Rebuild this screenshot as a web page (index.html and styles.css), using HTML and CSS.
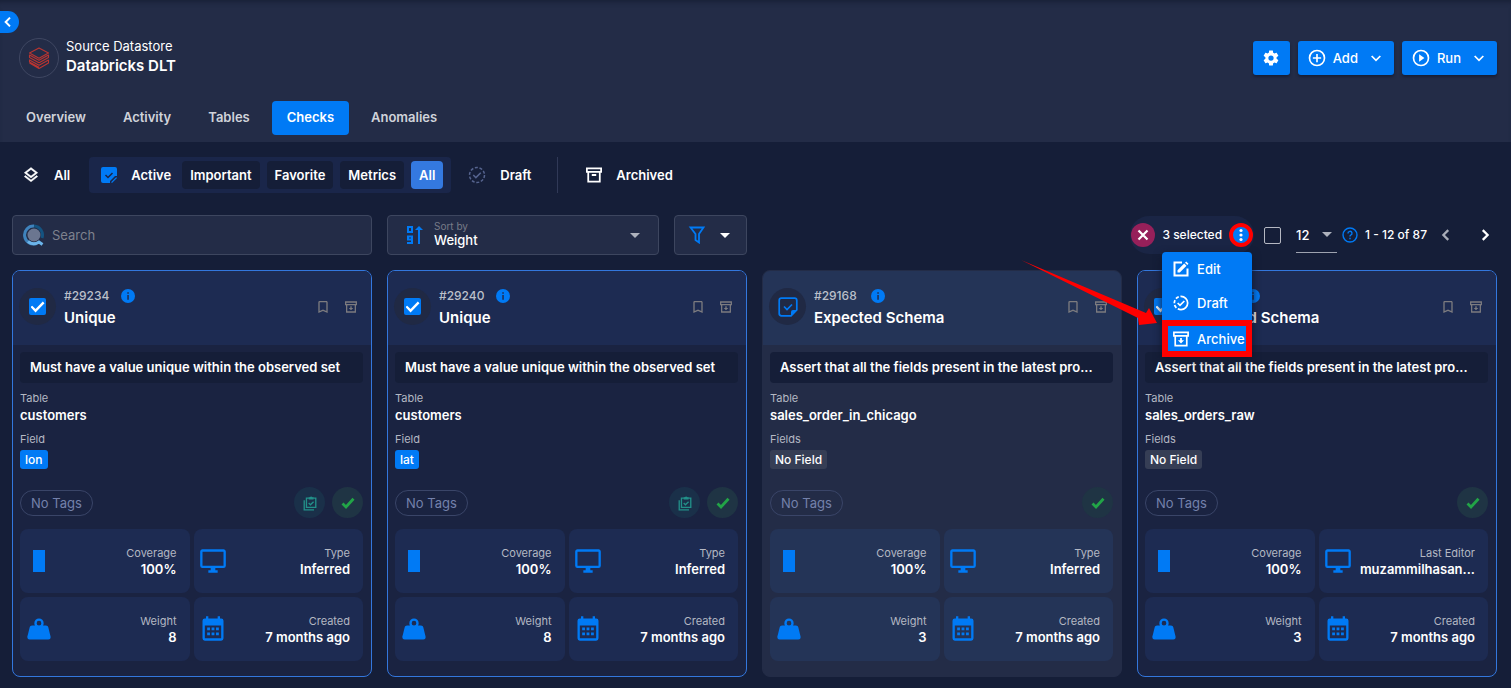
FILE: index.html
```
<!DOCTYPE html>
<html lang="en">
<head>
<meta charset="utf-8">
<meta name="viewport" content="width=device-width, initial-scale=1">
<title>Databricks DLT - Checks</title>
<link rel="stylesheet" href="styles.css">
</head>
<body>
<svg class="sprite" aria-hidden="true">
  <symbol id="chevron-left" viewBox="0 0 24 24"><path d="M15 5.500L8.500 12L15 18.500" fill="none" stroke="currentColor" stroke-width="3"/></symbol>
  <symbol id="chevron-right" viewBox="0 0 24 24"><path d="M9 5.500L15.500 12L9 18.500" fill="none" stroke="currentColor" stroke-width="3"/></symbol>
  <symbol id="chevron-down" viewBox="0 0 24 24"><path d="M5.500 9L12 15.500L18.500 9" fill="none" stroke="currentColor" stroke-width="2.600"/></symbol>
  <symbol id="caret" viewBox="0 0 10 5"><path d="M0 0H10L5 5Z" fill="currentColor"/></symbol>
  <symbol id="cog" viewBox="0 0 24 24"><path fill="currentColor" d="M12,15.5A3.5,3.5 0 0,1 8.500,12A3.500,3.500 0 0,1 12,8.500A3.500,3.500 0 0,1 15.500,12A3.500,3.500 0 0,1 12,15.500M19.430,12.970C19.470,12.650 19.500,12.330 19.500,12C19.500,11.670 19.470,11.340 19.430,11L21.540,9.370C21.730,9.220 21.780,8.950 21.660,8.730L19.660,5.270C19.540,5.050 19.270,4.960 19.050,5.050L16.560,6.050C16.040,5.660 15.500,5.320 14.870,5.070L14.500,2.420C14.460,2.180 14.250,2 14,2H10C9.750,2 9.540,2.180 9.500,2.420L9.130,5.070C8.500,5.320 7.960,5.660 7.440,6.050L4.950,5.050C4.730,4.960 4.460,5.050 4.340,5.270L2.340,8.730C2.210,8.950 2.270,9.220 2.460,9.370L4.570,11C4.530,11.340 4.500,11.670 4.500,12C4.500,12.330 4.530,12.650 4.570,12.970L2.460,14.630C2.270,14.780 2.210,15.050 2.340,15.270L4.340,18.730C4.460,18.950 4.730,19.030 4.950,18.950L7.440,17.940C7.960,18.340 8.500,18.680 9.130,18.930L9.500,21.580C9.540,21.820 9.750,22 10,22H14C14.250,22 14.460,21.820 14.500,21.580L14.870,18.930C15.500,18.670 16.040,18.340 16.560,17.940L19.050,18.950C19.270,19.030 19.540,18.950 19.660,18.730L21.660,15.270C21.780,15.050 21.730,14.780 21.540,14.630L19.430,12.970Z"/></symbol>
  <symbol id="plus-circle" viewBox="0 0 24 24"><g fill="none" stroke="currentColor" stroke-width="2.200"><circle cx="12" cy="12" r="10"/><path d="M12 6.500V17.500M6.500 12H17.500"/></g></symbol>
  <symbol id="play-circle" viewBox="0 0 24 24"><circle cx="12" cy="12" r="10" fill="none" stroke="currentColor" stroke-width="2.200"/><path d="M9.500 7L16.500 12L9.500 17Z" fill="currentColor"/></symbol>
  <symbol id="layers" viewBox="0 0 24 24"><path fill="currentColor" stroke="currentColor" stroke-width="0.600" d="M12,18.540L19.370,12.800L21,14.070L12,21.070L3,14.070L4.620,12.810L12,18.540M12,16L3,9L12,2L21,9L12,16M12,4.530L6.260,9L12,13.470L17.740,9L12,4.530Z"/></symbol>
  <symbol id="note-solid" viewBox="0 0 16 16"><path d="M2 0H14A2 2 0 0 1 16 2V9H14L9 14V16H2A2 2 0 0 1 0 14V2A2 2 0 0 1 2 0Z" fill="#007af5"/><path d="M10.500 16V14.800L14.800 10.500H16V11L11 16Z" fill="#007af5"/><path d="M4.500 8L7 10.500L11.500 6" fill="none" stroke="#1a2547" stroke-width="1.500"/></symbol>
  <symbol id="note-outline" viewBox="0 0 20 20"><path d="M13 18.800H3.500A2.300 2.300 0 0 1 1.200 16.500V3.500A2.300 2.300 0 0 1 3.500 1.200H16.500A2.300 2.300 0 0 1 18.800 3.500V13Z" fill="none" stroke="#007af5" stroke-width="1.700"/><path d="M19 13L13 19V15A2 2 0 0 1 15 13Z" fill="#007af5"/><path d="M6 9.500L9 12.500L14 7.500" fill="none" stroke="#007af5" stroke-width="1.700"/></symbol>
  <symbol id="draft" viewBox="0 0 24 24"><path d="M7 12L10.500 15.500L17 9" fill="none" stroke="currentColor" stroke-width="2"/><circle cx="12" cy="12" r="10" fill="none" stroke="currentColor" stroke-width="2" stroke-dasharray="4 2.280"/></symbol>
  <symbol id="draft-half" viewBox="0 0 24 24"><g fill="none" stroke="currentColor" stroke-width="2.600"><path d="M7 12L10.500 15.500L17 9M12 2A10 10 0 0 1 12 22"/><path d="M12 22A10 10 0 0 1 12 2" stroke-dasharray="5 2.600"/></g></symbol>
  <symbol id="archived" viewBox="0 0 18 18"><path d="M1 1.500H17V5.500H1ZM2.500 5.500V16.500H15.500V5.500M6.500 9H11.500" fill="none" stroke="currentColor" stroke-width="2"/></symbol>
  <symbol id="archive-down" viewBox="0 0 18 18"><path d="M1 1.500H17V5.500H1ZM2.500 5.500V16.500H15.500V5.500" fill="none" stroke="currentColor" stroke-width="1.900"/><path d="M8 8H10V10.500H12.500L9 14L5.500 10.500H8Z" fill="currentColor"/></symbol>
  <symbol id="bookmark" viewBox="0 0 24 24"><path fill="currentColor" d="M17,18L12,15.820L7,18V5H17M17,3H7A2,2 0 0,0 5,5V21L12,18L19,21V5C19,3.890 18.100,3 17,3Z"/></symbol>
  <symbol id="info" viewBox="0 0 14 14"><circle cx="7" cy="7" r="7" fill="#007af5"/><path d="M6.300 3.200H7.800V4.700H6.300ZM6.300 6H7.800V10.800H6.300Z" fill="#202b4d"/></symbol>
  <symbol id="edit" viewBox="0 0 16 16"><path d="M9 1.500H1.500V14.500H14.500V7.500" fill="none" stroke="currentColor" stroke-width="2"/><path d="M4.500 9.200L11.200 2.500L13.500 4.800L6.800 11.500H4.500ZM12 1.700L13.200 0.500L15.500 2.800L14.300 4Z" fill="currentColor"/></symbol>
  <symbol id="clipboards" viewBox="0 0 16 18"><g fill="none" stroke="currentColor" stroke-width="1.500"><path d="M4 3.500H14.500V14H4ZM1.500 6V16.700H12.500M6.500 9L8.500 11L12 7.500"/></g><path d="M6.500 5V2.500H8A1.300 1.300 0 0 1 10.500 2.500H12V5Z" fill="currentColor"/></symbol>
  <symbol id="tick" viewBox="0 0 14 12"><path d="M1.500 6.500L5 10L12.500 1.800" fill="none" stroke="currentColor" stroke-width="2.800"/></symbol>
  <symbol id="coverage" viewBox="0 0 28 28"><path d="M8 3H20V25H8Z" fill="currentColor"/></symbol>
  <symbol id="monitor" viewBox="0 0 24 24"><path fill="currentColor" d="M21,16H3V4H21M21,2H3C1.890,2 1,2.890 1,4V16A2,2 0 0,0 3,18H10V20H8V22H16V20H14V18H21A2,2 0 0,0 23,16V4C23,2.890 22.100,2 21,2Z"/></symbol>
  <symbol id="weight" viewBox="0 0 24 24"><path fill="currentColor" d="M12,3A4,4 0 0,1 16,7C16,7.730 15.810,8.410 15.460,9H18C18.950,9 19.750,9.670 19.950,10.560C21.960,18.570 22,18.780 22,19A2,2 0 0,1 20,21H4A2,2 0 0,1 2,19C2,18.780 2.040,18.570 4.050,10.560C4.250,9.670 5.050,9 6,9H8.540C8.190,8.410 8,7.730 8,7A4,4 0 0,1 12,3M12,5A2,2 0 0,0 10,7A2,2 0 0,0 12,9A2,2 0 0,0 14,7A2,2 0 0,0 12,5Z"/></symbol>
  <symbol id="calendar" viewBox="0 0 24 24"><path fill="currentColor" fill-rule="evenodd" d="M6 1H8V3H16V1H18V3H19A2 2 0 0 1 21 5V20A2 2 0 0 1 19 22H5A2 2 0 0 1 3 20V5A2 2 0 0 1 5 3H6ZM5 9V20H19V9Z"/><path d="M7 10.700H9.400V13.100H7ZM10.800 10.700H13.200V13.100H10.800ZM14.600 10.700H17V13.100H14.600ZM7 15H9.400V17.400H7ZM10.800 15H13.200V17.400H10.800ZM14.600 15H17V17.400H14.600Z" fill="currentColor"/></symbol>
</svg>

<header class="header">
  <button class="drawer-toggle" aria-label="Open sidebar"><svg class="i16"><use href="#chevron-left"/></svg></button>
  <div class="header-top">
    <div class="avatar">
      <svg class="i24" viewBox="0 0 24 24" fill="none" stroke="#b93531" stroke-width="1.100" stroke-linejoin="round"><path d="M2.500 7L12 2L21.500 7L12 12.200ZM2.500 9V11.500L12 16.700L21.500 11.500V9L12 14.200ZM2.500 13.500V16L12 21.200M2.500 17L12 22.500L21.500 17V14L12 19.200L2.500 14"/></svg>
    </div>
    <div class="titles">
      <p class="kind">Source Datastore</p>
      <h1 class="name">Databricks DLT</h1>
    </div>
    <div class="actions">
      <button class="btn btn-icon" aria-label="Settings"><svg class="i18"><use href="#cog"/></svg></button>
      <button class="btn"><svg class="i18"><use href="#plus-circle"/></svg><span>Add</span><svg class="i16"><use href="#chevron-down"/></svg></button>
      <button class="btn"><svg class="i18"><use href="#play-circle"/></svg><span>Run</span><svg class="i16"><use href="#chevron-down"/></svg></button>
    </div>
  </div>
  <nav class="tabs">
    <a class="tab" href="#overview">Overview</a>
    <a class="tab" href="#activity">Activity</a>
    <a class="tab" href="#tables">Tables</a>
    <a class="tab tab-on" href="#checks" aria-current="page">Checks</a>
    <a class="tab" href="#anomalies">Anomalies</a>
  </nav>
</header>

<main class="main">
  <div class="status">
    <button class="state"><svg class="i18"><use href="#layers"/></svg>All</button>
    <div class="state-group">
      <button class="state state-active"><svg class="i16"><use href="#note-solid"/></svg>Active</button>
      <button class="pill">Important</button>
      <button class="pill">Favorite</button>
      <button class="pill">Metrics</button>
      <button class="pill pill-on">All</button>
    </div>
    <button class="state state-draft"><svg class="i18 muted-icon"><use href="#draft"/></svg>Draft</button>
    <button class="state state-archived"><svg class="i16"><use href="#archived"/></svg>Archived</button>
  </div>

  <div class="toolbar">
    <label class="field search">
      <svg class="search-icon" viewBox="0 0 22 22" aria-hidden="true"><circle cx="11" cy="11" r="6.500" fill="#6b7690"/><g fill="none" stroke-width="3"><path d="M19 14A9 9 0 0 0 11 2" stroke="#145381"/><path d="M11 2A9 9 0 1 0 13.500 19.500" stroke="#3f83bd"/><path d="M5 17.500A9 9 0 0 0 16 18L19.500 20.500" stroke="#6bb4ea"/></g></svg>
      <input type="text" placeholder="Search" aria-label="Search">
    </label>
    <div class="field sort">
      <svg class="sort-icon" viewBox="0 0 18 20" fill="none" stroke="#007af5" stroke-width="2" aria-hidden="true"><path d="M2 2H6V7H2ZM6 14.500H2V11.500H6V18H1M13 19V3"/><path d="M9 5H17L13 1Z" fill="#007af5" stroke="none"/></svg>
      <div class="sort-text">
        <label for="sort">Sort by</label>
        <select id="sort"><option>Weight</option></select>
      </div>
      <svg class="caret caret-dim"><use href="#caret"/></svg>
    </div>
    <button class="field filter" aria-label="Filter">
      <svg class="i18" viewBox="0 0 18 18" fill="none" stroke="#007af5" stroke-width="1.800"><path d="M2.500 1.500H15.500L11 8V16.500L7.500 14V8Z"/></svg>
      <svg class="caret"><use href="#caret"/></svg>
    </button>

    <div class="paging">
      <div class="selection">
        <button class="round clear" aria-label="Clear selection"><svg class="i16" viewBox="0 0 16 16" stroke="#fff" stroke-width="2.200"><path d="M3.500 3.500L12.500 12.500M12.500 3.500L3.500 12.500"/></svg></button>
        <span class="count">3 selected</span>
        <button class="round more" aria-label="Bulk actions"><svg class="i16" viewBox="0 0 16 16" fill="#fff"><circle cx="8" cy="3.500" r="1.600"/><circle cx="8" cy="8" r="1.600"/><circle cx="8" cy="12.500" r="1.600"/></svg></button>
        <div class="menu">
          <button class="menu-item"><svg class="i16"><use href="#edit"/></svg>Edit</button>
          <button class="menu-item"><svg class="i16"><use href="#draft-half"/></svg>Draft</button>
          <button class="menu-item menu-marked"><svg class="i16"><use href="#archive-down"/></svg>Archive</button>
        </div>
        <svg class="pointer" viewBox="0 0 136 66" aria-hidden="true"><path d="M0 0L125 53L128 48L136 63L118 65L117 58Z" fill="#ff0000"/></svg>
      </div>
      <input class="box box-empty" type="checkbox" aria-label="Select all">
      <div class="size">
        <select aria-label="Items per page"><option>12</option></select>
        <svg class="caret caret-dim"><use href="#caret"/></svg>
      </div>
      <svg class="help" viewBox="0 0 16 16" fill="none" stroke="#007af5" stroke-width="1.400" aria-hidden="true"><circle cx="8" cy="8" r="7"/><path d="M6 6.500A2 2 0 1 1 8.700 8.200Q8 8.600 8 9.600M8 10.800V12.200"/></svg>
      <span class="range">1 - 12 of 87</span>
      <button class="step step-dim" aria-label="Previous page"><svg class="i18"><use href="#chevron-left"/></svg></button>
      <button class="step" aria-label="Next page"><svg class="i18"><use href="#chevron-right"/></svg></button>
    </div>
  </div>

  <section class="cards">
    <article class="card card-selected">
      <header class="card-head">
        <span class="disc"><input class="box" type="checkbox" checked aria-label="Select check 29234"></span>
        <div class="card-title"><p class="ident"><span>#29234</span><svg class="i14"><use href="#info"/></svg></p><h2>Unique</h2></div>
        <button class="ghost" aria-label="Bookmark"><svg class="i16"><use href="#bookmark"/></svg></button>
        <button class="ghost" aria-label="Archive check"><svg class="i12"><use href="#archive-down"/></svg></button>
      </header>
      <div class="card-body">
        <p class="desc">Must have a value unique within the observed set</p>
        <dl class="facts"><dt>Table</dt><dd>customers</dd><dt>Field</dt><dd><span class="chip chip-blue">lon</span></dd></dl>
        <div class="tags"><span class="no-tags">No Tags</span><span class="badge badge-teal"><svg class="i16"><use href="#clipboards"/></svg></span><span class="badge badge-green"><svg class="i14"><use href="#tick"/></svg></span></div>
        <div class="tiles">
          <div class="tile"><svg class="i28"><use href="#coverage"/></svg><p>Coverage<strong>100%</strong></p></div>
          <div class="tile"><svg class="i28"><use href="#monitor"/></svg><p>Type<strong>Inferred</strong></p></div>
          <div class="tile"><svg class="i28"><use href="#weight"/></svg><p>Weight<strong>8</strong></p></div>
          <div class="tile"><svg class="i28"><use href="#calendar"/></svg><p>Created<strong>7 months ago</strong></p></div>
        </div>
      </div>
    </article>

    <article class="card card-selected">
      <header class="card-head">
        <span class="disc"><input class="box" type="checkbox" checked aria-label="Select check 29240"></span>
        <div class="card-title"><p class="ident"><span>#29240</span><svg class="i14"><use href="#info"/></svg></p><h2>Unique</h2></div>
        <button class="ghost" aria-label="Bookmark"><svg class="i16"><use href="#bookmark"/></svg></button>
        <button class="ghost" aria-label="Archive check"><svg class="i12"><use href="#archive-down"/></svg></button>
      </header>
      <div class="card-body">
        <p class="desc">Must have a value unique within the observed set</p>
        <dl class="facts"><dt>Table</dt><dd>customers</dd><dt>Field</dt><dd><span class="chip chip-blue">lat</span></dd></dl>
        <div class="tags"><span class="no-tags">No Tags</span><span class="badge badge-teal"><svg class="i16"><use href="#clipboards"/></svg></span><span class="badge badge-green"><svg class="i14"><use href="#tick"/></svg></span></div>
        <div class="tiles">
          <div class="tile"><svg class="i28"><use href="#coverage"/></svg><p>Coverage<strong>100%</strong></p></div>
          <div class="tile"><svg class="i28"><use href="#monitor"/></svg><p>Type<strong>Inferred</strong></p></div>
          <div class="tile"><svg class="i28"><use href="#weight"/></svg><p>Weight<strong>8</strong></p></div>
          <div class="tile"><svg class="i28"><use href="#calendar"/></svg><p>Created<strong>7 months ago</strong></p></div>
        </div>
      </div>
    </article>

    <article class="card">
      <header class="card-head">
        <span class="disc"><svg class="i20"><use href="#note-outline"/></svg></span>
        <div class="card-title"><p class="ident"><span>#29168</span><svg class="i14"><use href="#info"/></svg></p><h2>Expected Schema</h2></div>
        <button class="ghost" aria-label="Bookmark"><svg class="i16"><use href="#bookmark"/></svg></button>
        <button class="ghost" aria-label="Archive check"><svg class="i12"><use href="#archive-down"/></svg></button>
      </header>
      <div class="card-body">
        <p class="desc">Assert that all the fields present in the latest pro...</p>
        <dl class="facts"><dt>Table</dt><dd>sales_order_in_chicago</dd><dt>Fields</dt><dd><span class="chip">No Field</span></dd></dl>
        <div class="tags"><span class="no-tags">No Tags</span><span class="badge badge-green"><svg class="i14"><use href="#tick"/></svg></span></div>
        <div class="tiles">
          <div class="tile"><svg class="i28"><use href="#coverage"/></svg><p>Coverage<strong>100%</strong></p></div>
          <div class="tile"><svg class="i28"><use href="#monitor"/></svg><p>Type<strong>Inferred</strong></p></div>
          <div class="tile"><svg class="i28"><use href="#weight"/></svg><p>Weight<strong>3</strong></p></div>
          <div class="tile"><svg class="i28"><use href="#calendar"/></svg><p>Created<strong>7 months ago</strong></p></div>
        </div>
      </div>
    </article>

    <article class="card card-selected">
      <header class="card-head">
        <span class="disc"><input class="box" type="checkbox" checked aria-label="Select check"></span>
        <div class="card-title"><p class="ident"><span></span><svg class="i14"><use href="#info"/></svg></p><h2>Expected Schema</h2></div>
        <button class="ghost" aria-label="Bookmark"><svg class="i16"><use href="#bookmark"/></svg></button>
        <button class="ghost" aria-label="Archive check"><svg class="i12"><use href="#archive-down"/></svg></button>
      </header>
      <div class="card-body">
        <p class="desc">Assert that all the fields present in the latest pro...</p>
        <dl class="facts"><dt>Table</dt><dd>sales_orders_raw</dd><dt>Fields</dt><dd><span class="chip">No Field</span></dd></dl>
        <div class="tags"><span class="no-tags">No Tags</span><span class="badge badge-green"><svg class="i14"><use href="#tick"/></svg></span></div>
        <div class="tiles">
          <div class="tile"><svg class="i28"><use href="#coverage"/></svg><p>Coverage<strong>100%</strong></p></div>
          <div class="tile"><svg class="i28"><use href="#monitor"/></svg><p>Last Editor<strong>muzammilhasan...</strong></p></div>
          <div class="tile"><svg class="i28"><use href="#weight"/></svg><p>Weight<strong>3</strong></p></div>
          <div class="tile"><svg class="i28"><use href="#calendar"/></svg><p>Created<strong>7 months ago</strong></p></div>
        </div>
      </div>
    </article>
  </section>
</main>
</body>
</html>
```
FILE: styles.css
```
* { box-sizing: border-box; }
body {
  margin: 0;
  background: #151e38;
  color: #fff;
  font: 500 13px/18px Inter, "Open Sans", sans-serif;
}
p, h1, h2, dl, dd { margin: 0; }
button, input, select { font: inherit; color: inherit; }
button { border: 0; padding: 0; background: none; cursor: pointer; }
svg { display: block; flex: none; }
.sprite { position: absolute; width: 0; height: 0; }
.i12 { width: 12px; height: 12px; }
.i14 { width: 14px; height: 14px; }
.i16 { width: 16px; height: 16px; }
.i18 { width: 18px; height: 18px; }
.i20 { width: 20px; height: 20px; }
.i24 { width: 24px; height: 24px; }
.i28 { width: 28px; height: 28px; }

/* Header */
.header {
  position: relative;
  padding: 38px 14px 7px 11px;
  background: #232c47;
  box-shadow: inset 0 5px 5px -3px #182036;
}
.drawer-toggle {
  position: absolute;
  left: 0;
  top: 11px;
  width: 19px;
  height: 22px;
  border-radius: 0 11px 11px 0;
  background: #007af5;
}
.header-top { display: flex; align-items: center; height: 39px; padding-left: 8px; }
.avatar {
  display: flex;
  align-items: center;
  justify-content: center;
  width: 40px;
  height: 40px;
  margin-right: 7px;
  border: 1px solid #3f4762;
  border-radius: 50%;
}
.titles { flex: 1; padding-bottom: 1px; }
.kind { font-size: 13px; line-height: 18px; font-weight: 400; }
.name { font-size: 15px; line-height: 22px; font-weight: 600; }
.actions { display: flex; gap: 8px; }
.btn {
  display: flex;
  align-items: center;
  gap: 7px;
  height: 34px;
  padding: 0 10px;
  border-radius: 3px;
  background: #007af5;
  box-shadow: 0 2px 3px #161e36;
}
.btn span { padding-right: 3px; }
.btn-icon { justify-content: center; width: 37px; padding: 0; }
.tabs { display: flex; gap: 7px; margin-top: 24px; }
.tab {
  padding: 7px 15px 9px;
  border-radius: 4px;
  color: #d0d3da;
  font-weight: 600;
  text-decoration: none;
}
.tab-on { background: #007af5; color: #fff; }

/* Status filter */
.main { padding: 15px 14px 10px 12px; }
.status { display: flex; align-items: center; padding-left: 10px; }
.state { display: flex; align-items: center; gap: 14px; font-weight: 600; }
.state-group {
  display: flex;
  align-items: center;
  gap: 7px;
  margin-left: 19px;
  padding: 4px 8px 4px 12px;
  border-radius: 4px;
  background: #1a264a;
}
.state-active { margin-right: 4px; }
.pill { padding: 5px 8px; border-radius: 4px; background: #151e38; font-weight: 600; }
.pill-on { background: #3479e0; }
.state-draft { margin-left: 17px; }
.muted-icon { color: #56648f; }
.state-archived {
  height: 36px;
  margin-left: 26px;
  padding-left: 28px;
  border-left: 1px solid #303957;
}

/* Search, sort and paging */
.toolbar { display: flex; align-items: center; gap: 15px; margin: 22px 0 15px; }
.field {
  display: flex;
  align-items: center;
  height: 40px;
  border: 1px solid #3d465f;
  border-radius: 4px;
  background: #232c47;
}
.search { flex: 0 1 360px; padding: 0 10px; gap: 7px; }
.search-icon { width: 22px; height: 22px; }
.search input { flex: 1; min-width: 0; border: 0; padding: 0; background: none; outline: 0; font-weight: 400; font-size: 13px; }
.search input::placeholder { color: #7e828e; opacity: 1; }
.sort { flex: 0 1 272px; padding: 0 18px; gap: 10px; }
.sort-icon { width: 18px; height: 20px; }
.sort-text { flex: 1; min-width: 0; padding-bottom: 1px; }
.sort label { display: block; color: #777b88; font-size: 10px; line-height: 11px; font-weight: 400; }
.sort select, .size select {
  display: block;
  appearance: none;
  border: 0;
  padding: 0;
  background: none;
  outline: 0;
}
.sort select { width: 100%; line-height: 16px; }
.caret { width: 10px; height: 5px; }
.caret-dim { color: #aeb2bd; }
.filter { gap: 14px; padding: 0 16px 0 13px; }
.paging { display: flex; align-items: center; margin-left: auto; }
.selection {
  position: relative;
  display: flex;
  align-items: center;
  gap: 7px;
  padding: 7px 1px;
  border-radius: 19px;
  background: #1a2545;
}
.count { font-size: 12px; white-space: nowrap; }
.round {
  display: flex;
  align-items: center;
  justify-content: center;
  width: 24px;
  height: 24px;
  border-radius: 50%;
}
.clear { background: #96205a; }
.more { border: 4px solid #f00; background: #007af5; }
.menu {
  position: absolute;
  z-index: 2;
  top: 36px;
  right: 2px;
  width: 90px;
  border-radius: 4px 4px 0 0;
  background: #007af5;
  box-shadow: 0 3px 8px #10172c;
}
.menu-item {
  display: flex;
  align-items: center;
  gap: 8px;
  width: 100%;
  height: 34px;
  padding: 0 11px;
}
.menu-marked { height: 37px; padding: 0 5px; border: 6px solid #f00; }
.pointer { position: absolute; z-index: 2; right: 97px; top: 44px; width: 136px; height: 66px; }
.box {
  appearance: none;
  display: grid;
  place-content: center;
  width: 17px;
  height: 17px;
  margin: 0;
  border-radius: 2px;
  background: #007af5;
}
.box:checked::after {
  content: "";
  width: 14px;
  height: 12px;
  background: #fff;
  clip-path: polygon(0 55%, 12% 43%, 36% 70%, 88% 8%, 100% 22%, 36% 100%);
}
.box-empty { margin-left: 10px; border: 1px solid #b5b8c2; background: none; }
.size {
  display: flex;
  align-items: center;
  gap: 8px;
  height: 36px;
  width: 41px;
  margin: 0 5px 0 15px;
  border-bottom: 1px solid #9ea3b0;
}
.size select { width: 18px; }
.help { width: 16px; height: 16px; margin-right: 7px; }
.range { font-size: 12px; white-space: nowrap; }
.step { margin-left: 10px; }
.step + .step { margin-left: 21px; margin-right: 3px; }
.step-dim { color: #a9adb8; }

/* Check cards */
.cards { display: grid; grid-template-columns: repeat(4, minmax(0, 1fr)); gap: 15px; }
.card {
  overflow: hidden;
  border: 1px solid #232c47;
  border-radius: 8px;
  background: #232c47;
  --tint: #243457;
}
.card-selected { border-color: #3377dd; background: #1a2341; --tint: #1d2b52; }
.card-head {
  display: flex;
  align-items: center;
  height: 74px;
  padding: 0 14px 3px 6px;
  background: var(--tint);
}
.disc {
  display: flex;
  align-items: center;
  justify-content: center;
  width: 37px;
  height: 37px;
  margin-right: 8px;
  border-radius: 50%;
  background: #202944;
}
.card-title { flex: 1; min-width: 0; }
.ident { display: flex; align-items: center; gap: 12px; height: 22px; color: #bcc0ca; font-size: 12px; line-height: 22px; }
.ident span { min-width: 45px; }
.card-title h2 { font-size: 15px; line-height: 22px; font-weight: 600; }
.ghost { margin-left: 14px; color: #7c7b7f; }
.card-body { padding: 7px 8px 15px 7px; }
.desc {
  padding: 6px 10px 7px;
  overflow: hidden;
  border-radius: 4px;
  background: #151e38;
  font-weight: 600;
  white-space: nowrap;
  text-overflow: ellipsis;
}
.facts { margin-top: 7px; }
.facts dt { color: #b4b8c3; font-size: 11px; line-height: 17px; font-weight: 400; }
.facts dd { margin-bottom: 7px; line-height: 17px; font-weight: 600; }
.chip {
  display: inline-block;
  margin-top: 2px;
  padding: 0 5px;
  border-radius: 3px;
  background: #363e55;
  font-size: 12px;
  line-height: 19px;
  font-weight: 500;
}
.chip-blue { background: #007af5; }
.tags { display: flex; align-items: center; gap: 7px; min-height: 31px; margin-top: 18px; }
.no-tags {
  margin-right: auto;
  padding: 3px 10px;
  border: 1px solid #3a4568;
  border-radius: 13px;
  color: #7481ab;
  font-weight: 400;
}
.badge { display: flex; align-items: center; justify-content: center; width: 31px; height: 31px; border-radius: 50%; }
.badge-teal { background: #1a3049; color: #229089; }
.badge-green { background: #1f3444; color: #22a447; }
.tiles { display: grid; grid-template-columns: repeat(2, minmax(0, 1fr)); gap: 4px; margin-top: 11px; }
.tile {
  display: flex;
  align-items: center;
  justify-content: space-between;
  height: 64px;
  padding: 0 13px 1px 5px;
  border-radius: 8px;
  background: var(--tint);
  color: #007af5;
}
.tile p { min-width: 0; color: #b4b8c3; font-size: 11px; line-height: 16px; font-weight: 400; text-align: right; }
.tile strong { display: block; color: #fff; font-size: 13px; font-weight: 600; white-space: nowrap; }
```
